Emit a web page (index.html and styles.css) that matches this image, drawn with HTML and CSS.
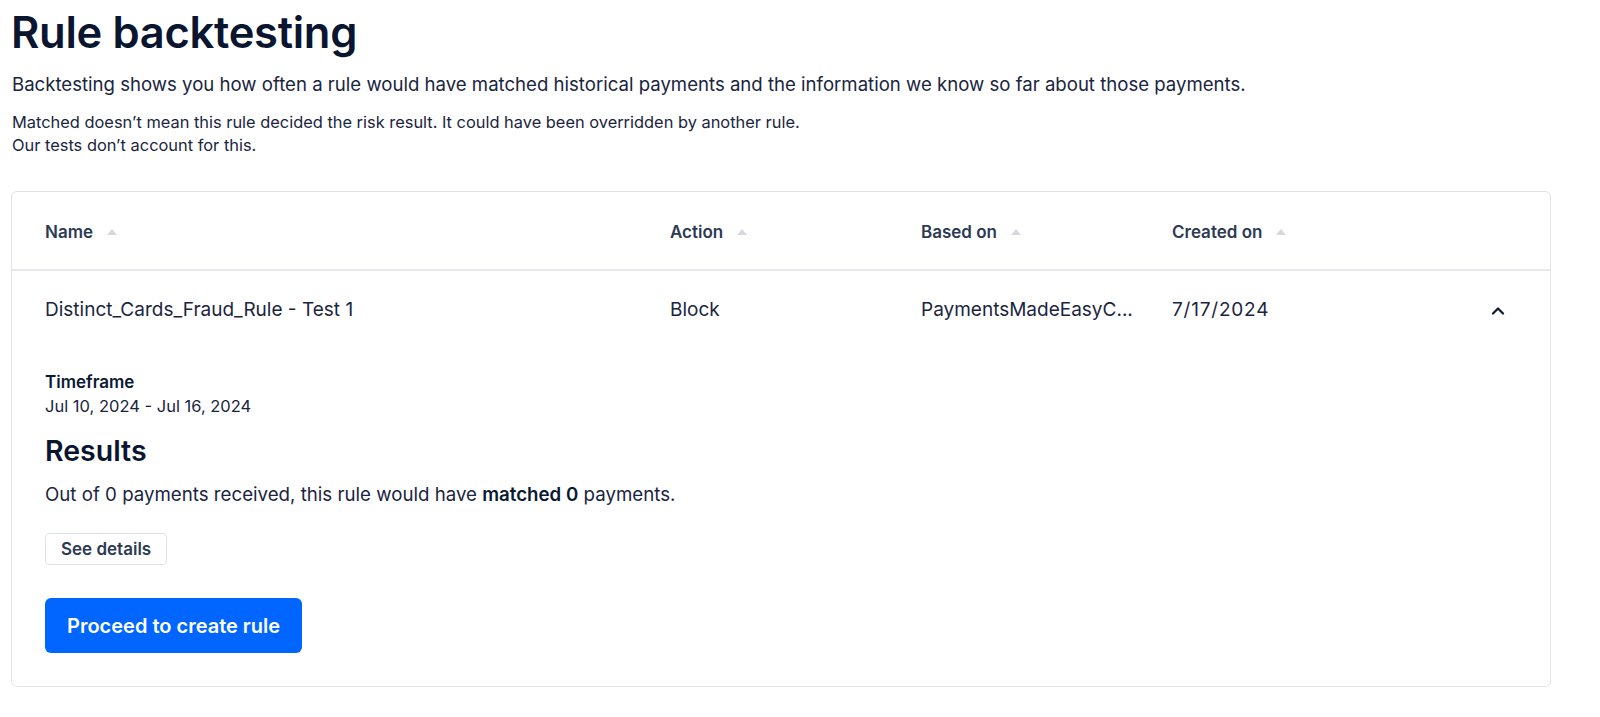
FILE: index.html
```html
<!DOCTYPE html>
<html>
<head>
<meta charset="utf-8">
<link rel="stylesheet" href="styles.css">
</head>
<body>
<div class="page">
  <h1 class="title">Rule backtesting</h1>
  <p class="lead">Backtesting shows you how often a rule would have matched historical payments and the information we know so far about those payments.</p>
  <p class="note">Matched doesn’t mean this rule decided the risk result. It could have been overridden by another rule.<br>Our tests don’t account for this.</p>

  <div class="card">
    <div class="row head">
      <div class="th">Name <span class="sort"></span></div>
      <div class="th">Action <span class="sort"></span></div>
      <div class="th">Based on <span class="sort"></span></div>
      <div class="th">Created on <span class="sort"></span></div>
      <div></div>
    </div>
    <div class="row body">
      <div class="td">Distinct_Cards_Fraud_Rule - Test 1</div>
      <div class="td">Block</div>
      <div class="td">PaymentsMadeEasyC...</div>
      <div class="td date">7/17/2024</div>
      <div class="chev">
        <svg width="14" height="9" viewBox="0 0 14 9"><path d="M2 7.5 L7 2.5 L12 7.5" fill="none" stroke="#0b1a33" stroke-width="2.2" stroke-linecap="round" stroke-linejoin="round"/></svg>
      </div>
    </div>
    <div class="details">
      <div class="label">Timeframe</div>
      <div class="value">Jul 10, 2024 - Jul 16, 2024</div>
      <h2 class="results">Results</h2>
      <p class="summary">Out of 0 payments received, this rule would have <b>matched 0</b> payments.</p>
      <button class="btn-secondary">See details</button>
      <button class="btn-primary">Proceed to create rule</button>
    </div>
  </div>
</div>
</body>
</html>
```
FILE: styles.css
```css
* { box-sizing: border-box; }
html, body { margin: 0; padding: 0; background: #fff; }
body {
  font-family: Inter, "Noto Sans", sans-serif;
  color: #0b1a33;
}
.page { padding: 0 50px 0 11px; width: 1600px; }
.title {
  margin: 0;
  padding-top: 6px;
  font-size: 43.5px;
  line-height: 52px;
  font-weight: 600;
  letter-spacing: -0.3px;
  color: #0a1530;
}
.lead {
  margin: 13px 0 0 1px;
  font-size: 18.6px;
  line-height: 26px;
  color: #1a2540;
}
.note {
  margin: 14px 0 0 1px;
  font-size: 16.4px;
  line-height: 23px;
  color: #1a2540;
}
.card {
  margin-top: 34px;
  width: 1540px;
  border: 1px solid #e0e3e8;
  border-radius: 6px;
}
.row {
  display: grid;
  grid-template-columns: 625px 251px 251px 1fr 24px;
  padding: 0 40px 0 33px;
  align-items: center;
}
.head {
  height: 79px;
  padding-top: 3px;
  border-bottom: 2px solid #e6e8ec;
}
.th {
  font-size: 17px;
  font-weight: 600;
  color: #2c3a55;
  display: flex;
  align-items: center;
  gap: 14px;
}
.sort {
  width: 0; height: 0;
  border-left: 5px solid transparent;
  border-right: 5px solid transparent;
  border-bottom: 6px solid #d4d8de;
}
.body { height: 76px; }
.td {
  font-size: 19px;
  color: #1a2540;
  white-space: nowrap;
}
.td.date { letter-spacing: 0.8px; }
.chev { display: flex; justify-content: center; padding-top: 2px; }
.details { padding: 24px 33px 33px 33px; }
.label { font-size: 17px; font-weight: 600; line-height: 22px; color: #0b1a33; }
.value { font-size: 16.5px; line-height: 24px; margin-top: 1px; color: #1a2540; }
.results {
  margin: 15px 0 0 0;
  font-size: 28.5px;
  line-height: 36px;
  font-weight: 600;
  color: #0a1530;
}
.summary {
  margin: 13px 0 0 0;
  font-size: 18.7px;
  line-height: 26px;
  color: #1a2540;
}
.summary b { font-weight: 600; color: #0b1a33; }
.btn-secondary {
  display: block;
  margin-top: 25px;
  height: 32px;
  padding: 0 15px;
  font-family: inherit;
  font-size: 17px;
  font-weight: 600;
  color: #2c3a55;
  background: #fff;
  border: 1px solid #dfe2e7;
  border-radius: 4px;
}
.btn-primary {
  display: block;
  margin-top: 33px;
  height: 55px;
  padding: 0 22px;
  font-family: inherit;
  font-size: 20px;
  font-weight: 600;
  color: #fff;
  background: #0066ff;
  border: none;
  border-radius: 6px;
}
```
